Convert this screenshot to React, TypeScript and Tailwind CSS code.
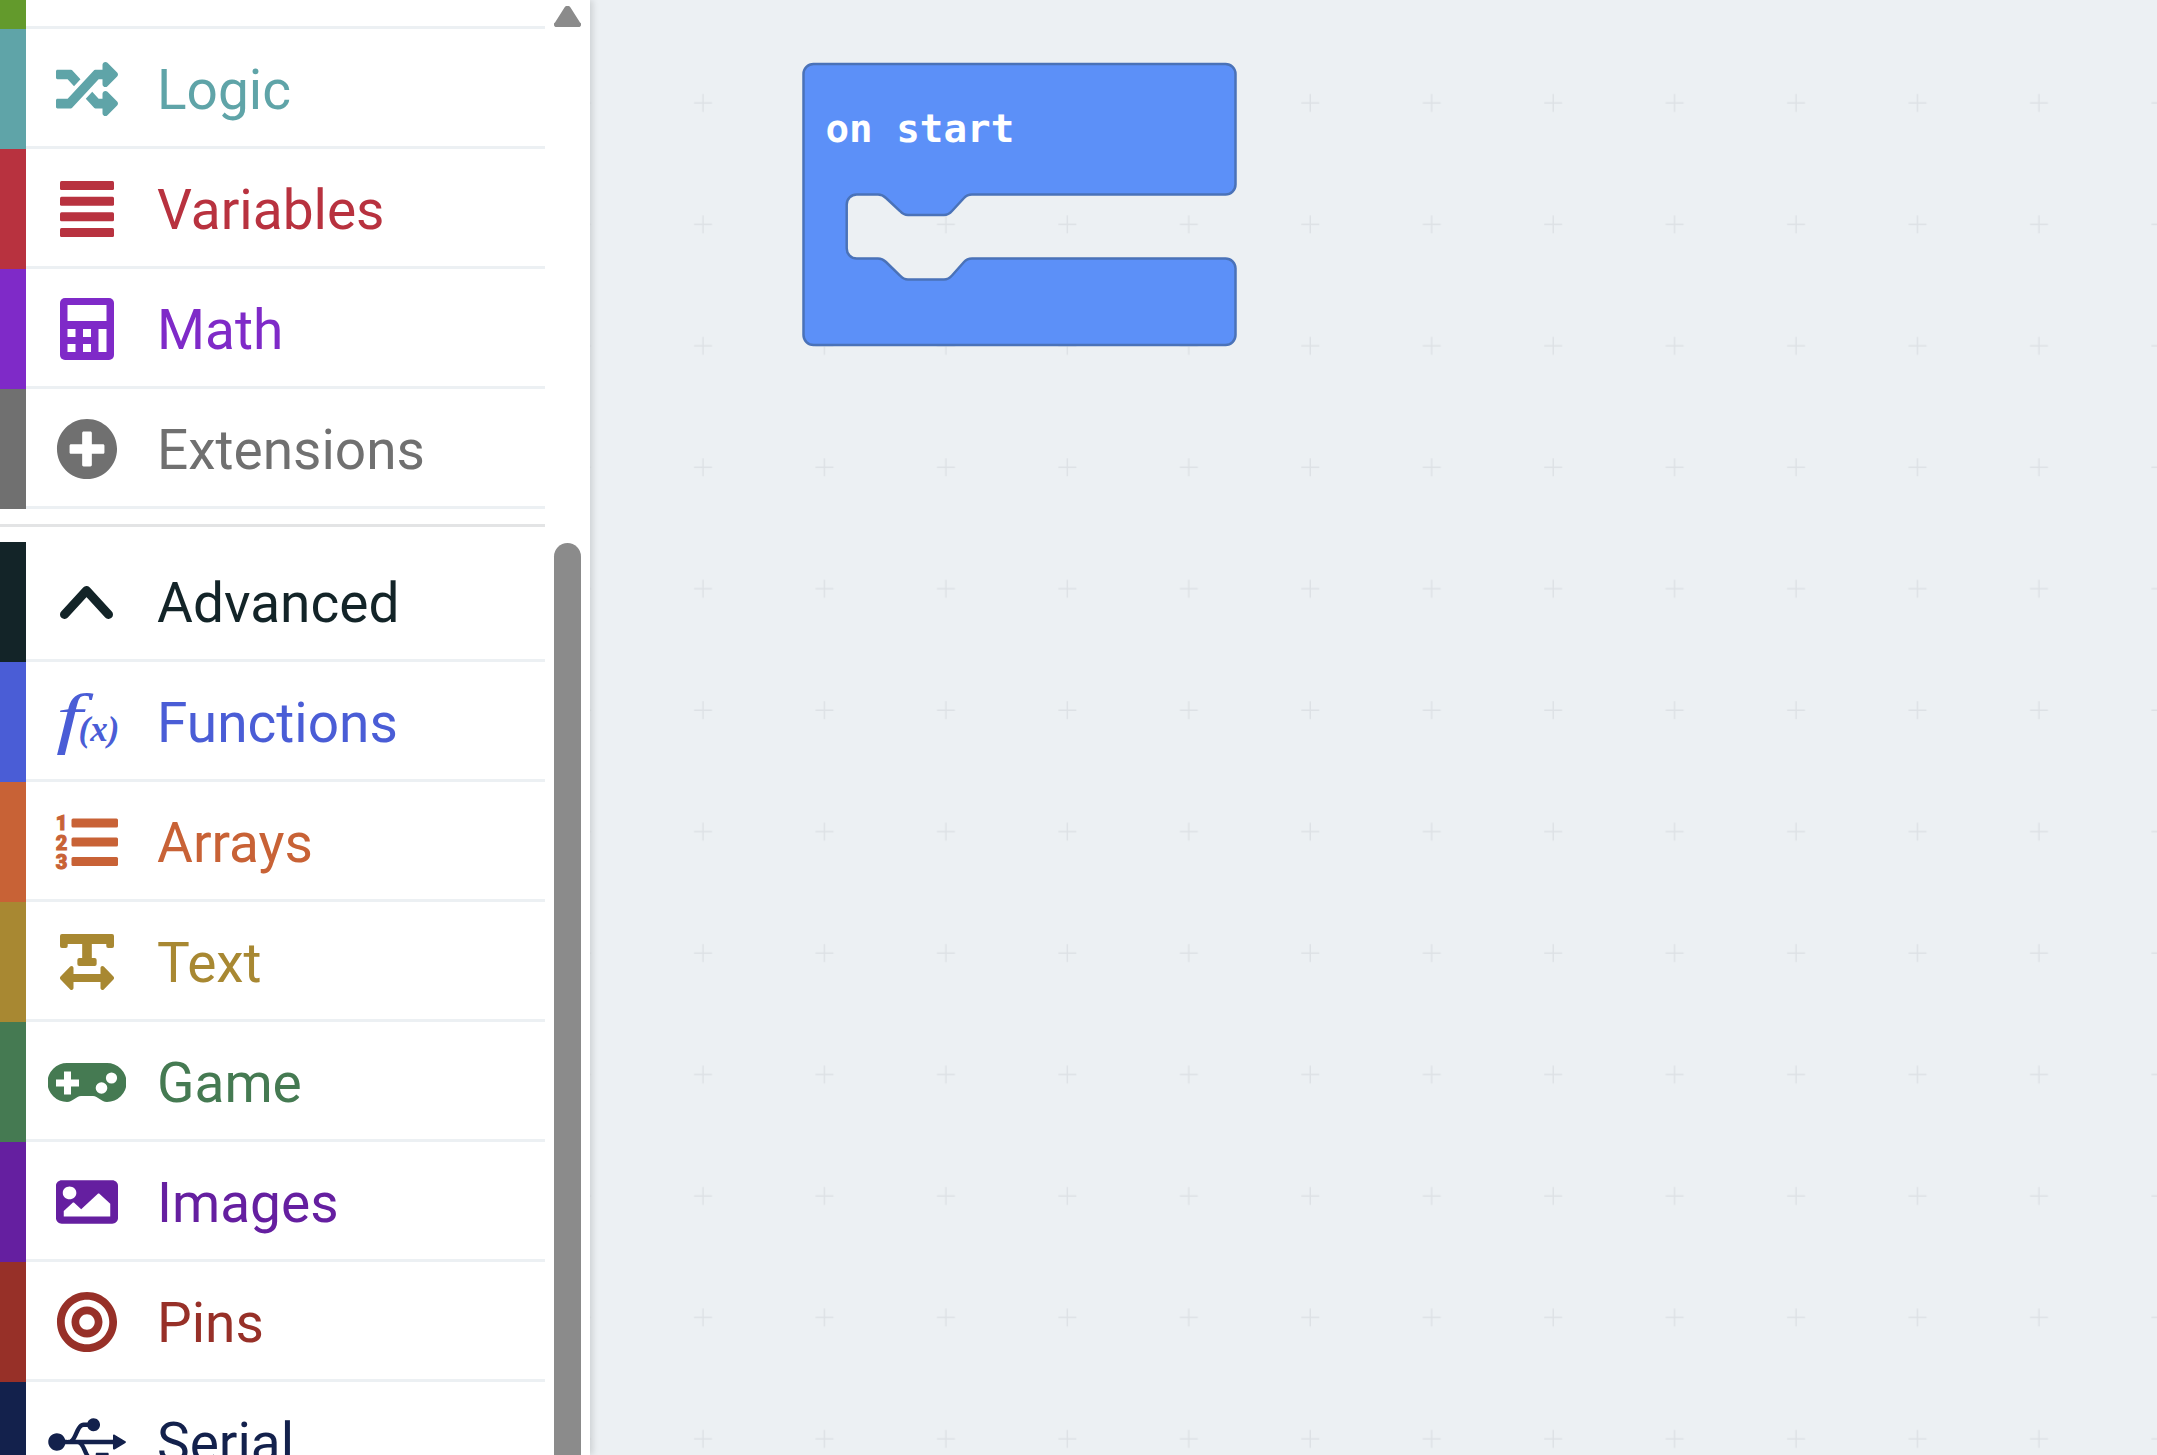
import type { ReactNode } from "react";
import { FaBullseye, FaImage, FaPlusCircle, FaRandom, FaTextWidth, FaUsb } from "react-icons/fa";

function Bars() {
  return (
    <svg viewBox="0 0 54 56" className="h-[56px] w-[54px]" fill="currentColor">
      <rect width="54" height="9" rx="1.5" />
      <rect y="15.7" width="54" height="9" rx="1.5" />
      <rect y="31.3" width="54" height="9" rx="1.5" />
      <rect y="47" width="54" height="9" rx="1.5" />
    </svg>
  );
}

function Calculator() {
  return (
    <svg viewBox="0 0 54 62" className="h-[62px] w-[54px]">
      <rect width="54" height="62" rx="5" fill="currentColor" />
      <rect x="7.5" y="7" width="39" height="16" fill="#fff" />
      <rect x="7.5" y="31" width="8" height="8" fill="#fff" />
      <rect x="23" y="31" width="8" height="8" fill="#fff" />
      <rect x="38.5" y="31" width="8" height="23" fill="#fff" />
      <rect x="7.5" y="46" width="8" height="8" fill="#fff" />
      <rect x="23" y="46" width="8" height="8" fill="#fff" />
    </svg>
  );
}

function Chevron() {
  return (
    <svg viewBox="0 0 53 33" className="h-[33px] w-[53px]" fill="none" stroke="currentColor" strokeWidth="9" strokeLinecap="round" strokeLinejoin="round">
      <path d="M4.5 28.5 26.5 4.5 48.5 28.5" />
    </svg>
  );
}

function Fx() {
  return (
    <span className="relative block h-[60px] w-[62px] font-['Liberation_Serif',serif] italic">
      <span className="absolute left-0 top-[-10px] origin-left scale-x-[1.4] text-[68px] leading-[72px]">f</span>
      <span className="absolute left-[23px] top-[18px] text-[35px] leading-[40px] font-bold">(x)</span>
    </span>
  );
}

function ListOl() {
  return (
    <svg viewBox="0 0 62 55" className="h-[55px] w-[62px] overflow-visible" fill="currentColor">
      <rect x="15.5" y="3.5" width="46.5" height="9" rx="1.5" />
      <rect x="15.5" y="22.5" width="46.5" height="9" rx="1.5" />
      <rect x="15.5" y="42" width="46.5" height="9" rx="1.5" />
      <g textAnchor="middle" fontSize="20" fontWeight="900" fontFamily="Roboto, sans-serif" stroke="currentColor" strokeWidth="1">
        <text x="5.5" y="15">1</text>
        <text x="5.5" y="35">2</text>
        <text x="5.5" y="54">3</text>
      </g>
    </svg>
  );
}

function Gamepad() {
  return (
    <svg viewBox="0 0 78 39" className="h-[39px] w-[78px]">
      <path
        fill="currentColor"
        d="M19 0H59A19.5 19.5 0 0 1 59 39C53 39 50 33 45 33H33C28 33 25 39 19 39A19.5 19.5 0 0 1 19 0z"
      />
      <path fill="#fff" d="M16 8.5h7v8h8v7h-8v8h-7v-8H8v-7h8z" />
      <circle cx="63.5" cy="15" r="5.6" fill="#fff" />
      <circle cx="53.5" cy="25" r="5.8" fill="#fff" />
    </svg>
  );
}

const rows: { label: string; color: string; textColor: string; icon: ReactNode }[] = [
  { label: "Logic", color: "bg-[#5fa4a8]", textColor: "text-[#5fa4a8]", icon: <FaRandom className="h-[62px] w-[62px]" /> },
  { label: "Variables", color: "bg-[#b8323f]", textColor: "text-[#b8323f]", icon: <Bars /> },
  { label: "Math", color: "bg-[#7f2ac8]", textColor: "text-[#7f2ac8]", icon: <Calculator /> },
  { label: "Extensions", color: "bg-[#707070]", textColor: "text-[#707070]", icon: <FaPlusCircle className="h-[62px] w-[62px]" /> },
];

const advanced: { label: string; color: string; textColor: string; icon: ReactNode }[] = [
  { label: "Advanced", color: "bg-[#132428]", textColor: "text-[#132428]", icon: <Chevron /> },
  { label: "Functions", color: "bg-[#4a5dd6]", textColor: "text-[#4a5dd6]", icon: <Fx /> },
  { label: "Arrays", color: "bg-[#c86236]", textColor: "text-[#c86236]", icon: <ListOl /> },
  { label: "Text", color: "bg-[#a88832]", textColor: "text-[#a88832]", icon: <FaTextWidth className="h-[64px] w-[54px]" preserveAspectRatio="none" /> },
  { label: "Game", color: "bg-[#457a52]", textColor: "text-[#457a52]", icon: <Gamepad /> },
  { label: "Images", color: "bg-[#651fa0]", textColor: "text-[#651fa0]", icon: <FaImage className="h-[58px] w-[62px]" preserveAspectRatio="none" /> },
  { label: "Pins", color: "bg-[#973028]", textColor: "text-[#973028]", icon: <FaBullseye className="h-[62px] w-[62px]" /> },
  { label: "Serial", color: "bg-[#13214c]", textColor: "text-[#13214c]", icon: <FaUsb className="h-[62px] w-[78px]" /> },
];

function Row({ label, color, textColor, icon }: { label: string; color: string; textColor: string; icon: ReactNode }) {
  return (
    <div className="flex h-[120px] shrink-0">
      <div className={`w-[26px] ${color}`} />
      <div className={`flex flex-1 items-center border-b-[3px] border-[#ecf0f3] ${textColor}`}>
        <div className="flex w-[121px] items-center justify-center pt-[3px]">{icon}</div>
        <span className="ml-[10px] block pt-[5px] text-[55px] font-['Roboto',sans-serif]">{label}</span>
      </div>
    </div>
  );
}

export default function App() {
  return (
    <div className="flex h-screen overflow-hidden bg-[#ecf0f3]">
      <aside className="z-10 flex h-full w-[590px] shrink-0 bg-white shadow-[3px_0_6px_rgba(0,0,0,0.12)]">
        <div className="flex w-[545px] flex-col">
          <div className="flex h-[29px] shrink-0">
            <div className="w-[26px] bg-[#639a2c]" />
            <div className="flex-1 border-b-[3px] border-[#ecf0f3]" />
          </div>
          {rows.map((r) => (
            <Row key={r.label} {...r} />
          ))}
          <div className="my-[15px] h-[3px] shrink-0 bg-[#e3e4e5]" />
          {advanced.map((r) => (
            <Row key={r.label} {...r} />
          ))}
        </div>
        <div className="ml-[9px] flex w-[27px] flex-col pt-[6px]">
          <svg viewBox="0 0 27 21" className="h-[21px] w-[27px]" fill="#8b8b8b">
            <path d="M10.5 1.5a3.5 3.5 0 0 1 6 0l9.5 15a2.5 2.5 0 0 1-2 4.5H3a2.5 2.5 0 0 1-2-4.5z" />
          </svg>
          <div className="mt-[516px] flex-1 rounded-t-[14px] bg-[#8b8b8b]" />
        </div>
      </aside>
      <main className="relative flex-1">
        <svg className="absolute inset-0 h-full w-full">
          <defs>
            <pattern id="grid" x="-69.4" y="42" width="121.45" height="121.45" patternUnits="userSpaceOnUse">
              <path d="M52 61h18M61 52v18" stroke="#dde1e5" strokeWidth="1.5" fill="none" />
            </pattern>
          </defs>
          <rect width="100%" height="100%" fill="url(#grid)" />
        </svg>
        <svg viewBox="0 0 480 330" className="absolute left-[190px] top-[40px] h-[330px] w-[480px]">
          <path
            d="M33.5 24H445.5a10 10 0 0 1 10 10V144.5a10 10 0 0 1-10 10H192q-5 0-8 3.5L172 171q-3.5 4-8 4H128q-4.5 0-8-4L106 158q-3.5-3.5-8-3.5H76.7a10 10 0 0 0-10 10V208.5a10 10 0 0 0 10 10H98q4.5 0 8 3.5L120 235.5q3.5 4 8 4H164q4.5 0 8-4L184 222q3-3.5 8-3.5H445.5a10 10 0 0 1 10 10V295a10 10 0 0 1-10 10H33.5a10 10 0 0 1-10-10V34a10 10 0 0 1 10-10z"
            fill="#5c90f8"
            stroke="#4a72b8"
            strokeWidth="2.5"
          />
        </svg>
        <span className="absolute left-[235.5px] top-[106px] text-[39.2px] leading-[46px] font-bold whitespace-pre text-white font-['DejaVu_Sans_Mono',monospace]">
          on start
        </span>
      </main>
    </div>
  );
}
